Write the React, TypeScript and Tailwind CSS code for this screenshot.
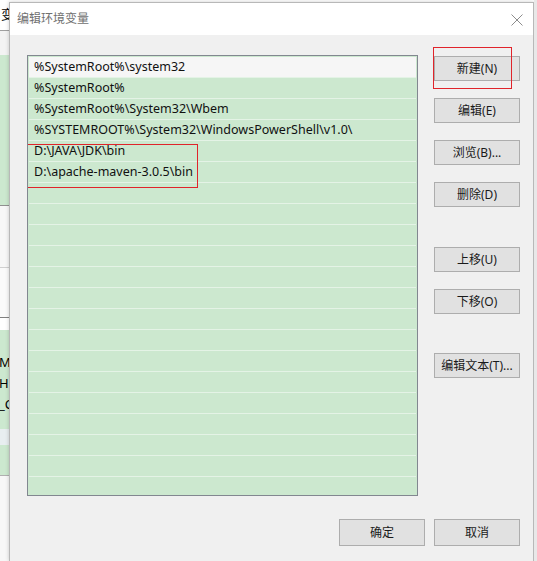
import React from "react";

const paths = [
  "%SystemRoot%\\system32",
  "%SystemRoot%",
  "%SystemRoot%\\System32\\Wbem",
  "%SYSTEMROOT%\\System32\\WindowsPowerShell\\v1.0\\",
  "D:\\JAVA\\JDK\\bin",
  "D:\\apache-maven-3.0.5\\bin",
];

const rows = [...paths, ...Array(15).fill("")];

const font = { fontFamily: '"Noto Sans", "Noto Sans CJK SC", sans-serif' };

function Btn({ label, className = "" }: { label: string; className?: string }) {
  return (
    <div
      className={`h-[25px] w-[86px] flex items-center justify-center border border-[#adadad] bg-[#e1e1e1] text-[12px] text-[#1a1a1a] ${className}`}
    >
      {label}
    </div>
  );
}

function App() {
  return (
    <div className="w-[537px] h-[561px] flex overflow-hidden bg-white" style={font}>
      {/* window behind the dialog */}
      <div className="w-[9px] shrink-0 flex flex-col overflow-hidden text-[13px] text-black">
        <div className="h-[30px] bg-white flex items-center justify-end">
          <span className="-mr-[5px]">变</span>
        </div>
        <div className="h-px bg-[#a0a0a0]" />
        <div className="h-[24px] bg-[#f3f3f3]" />
        <div className="h-[150px] bg-[#cce8cf]" />
        <div className="h-px bg-[#909090]" />
        <div className="h-[62px] bg-[#f7f7f7] border-b border-[#d0d0d0]" />
        <div className="h-[50px] bg-[#fafafa] border-b border-[#808080]" />
        <div className="h-[12px] bg-white" />
        <div className="h-[145px] bg-[#cce8cf] flex flex-col pt-[22px] leading-[21px]">
          <span className="-ml-[1px]">M</span>
          <span className="-ml-[1px]">HC</span>
          <span className="-ml-[1px]">_C</span>
          <div className="mt-[14px] h-[16px] bg-[#e8eef0]" />
        </div>
        <div className="flex-1 bg-[#f7f7f7] border-t border-[#b0b0b0]" />
      </div>

      {/* dialog */}
      <div className="flex-1 flex flex-col border-l border-[#8a8a8a] border-r mt-[2px] border-t border-[#b8b8b8] shadow-[0_0_4px_rgba(0,0,0,0.2)]">
        <div className="h-[32px] shrink-0 bg-white flex items-center justify-between pl-[7px] pr-[10px]">
          <span className="text-[12px] text-[#707070]">编辑环境变量</span>
          <svg width="12" height="12" viewBox="0 0 12 12" className="mt-[1px]">
            <path d="M0.5 0.5 L11.5 11.5 M11.5 0.5 L0.5 11.5" stroke="#8c8c8c" strokeWidth="1" />
          </svg>
        </div>
        <div className="flex-1 bg-[#f0f0f0] flex flex-col pl-[17px] pt-[20px] pr-[13px]">
          <div className="flex">
            {/* list */}
            <div className="relative w-[391px] h-[441px] border border-[#828790] bg-[#cce8cf] p-px overflow-hidden">
              {rows.map((r, i) => (
                <div
                  key={i}
                  className={`h-[21px] flex items-center pl-[5px] text-[12.5px] text-[#111] border-b border-[#e4f3e6] ${
                    i === 0 ? "bg-[#f6f6f6]" : ""
                  }`}
                >
                  {r}
                </div>
              ))}
              <div className="absolute left-[-3px] top-[88px] w-[173px] h-[44px] border border-[#e0242b]" />
            </div>

            {/* buttons */}
            <div className="relative ml-[16px] pt-[1px] flex flex-col">
              <Btn label="新建(N)" />
              <Btn label="编辑(E)" className="mt-[17px]" />
              <Btn label="浏览(B)..." className="mt-[17px]" />
              <Btn label="删除(D)" className="mt-[17px]" />
              <Btn label="上移(U)" className="mt-[40px]" />
              <Btn label="下移(O)" className="mt-[17px]" />
              <Btn label="编辑文本(T)..." className="mt-[39px]" />
              <div className="absolute -left-px -top-[8px] w-[79px] h-[42px] border border-[#e0242b]" />
            </div>
          </div>

          <div className="flex justify-end gap-[9px] mt-[23px]">
            <Btn label="确定" className="h-[27px]" />
            <Btn label="取消" className="h-[27px]" />
          </div>
        </div>
      </div>
      <div className="w-[3px] shrink-0 bg-[#e8e8e8]" />
    </div>
  );
}

export default App;
